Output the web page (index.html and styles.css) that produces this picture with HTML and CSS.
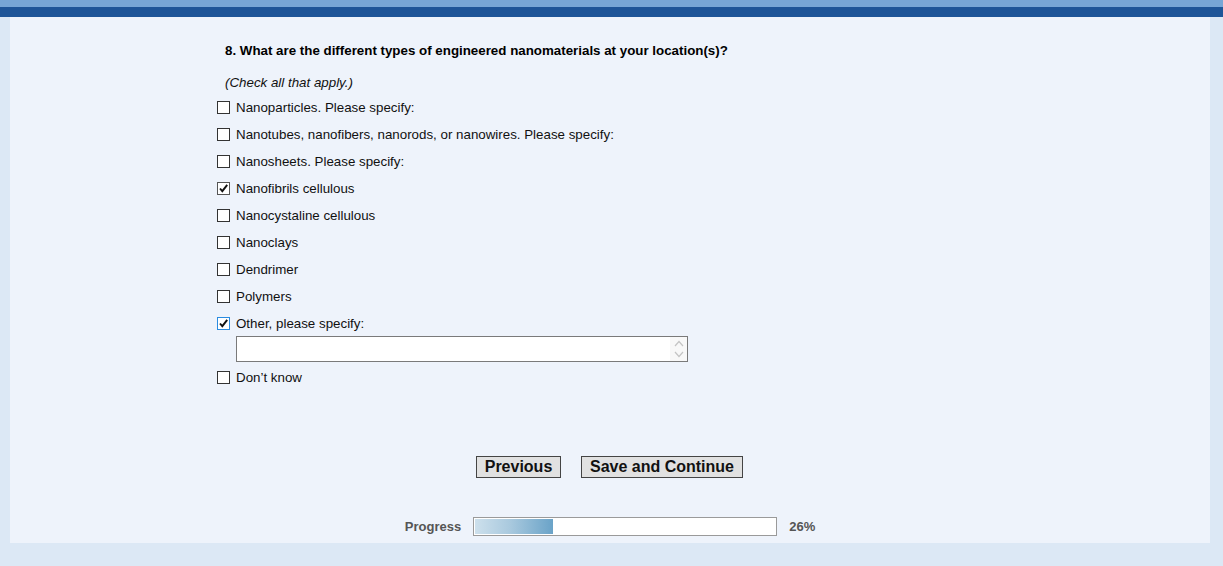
FILE: index.html
```html
<!DOCTYPE html>
<html>
<head>
<meta charset="utf-8">
<link rel="stylesheet" href="styles.css">
</head>
<body>
<div class="topbar"><div class="topbar-light"></div><div class="topbar-dark"></div></div>
<div class="page">
  <div class="panel">
    <div class="survey">
      <div class="question">8. What are the different types of engineered nanomaterials at your location(s)?</div>
      <div class="instruction">(Check all that apply.)</div>
      <div class="options">
        <div class="opt"><span class="cb"></span><span>Nanoparticles. Please specify:</span></div>
        <div class="opt"><span class="cb"></span><span>Nanotubes, nanofibers, nanorods, or nanowires. Please specify:</span></div>
        <div class="opt"><span class="cb"></span><span>Nanosheets. Please specify:</span></div>
        <div class="opt"><span class="cb checked"><svg viewBox="0 0 11 11" width="11" height="11"><path d="M2 5.5 L4.3 8.2 L9.2 1.8" fill="none" stroke="#111" stroke-width="1.9"/></svg></span><span>Nanofibrils cellulous</span></div>
        <div class="opt"><span class="cb"></span><span>Nanocystaline cellulous</span></div>
        <div class="opt"><span class="cb"></span><span>Nanoclays</span></div>
        <div class="opt"><span class="cb"></span><span>Dendrimer</span></div>
        <div class="opt"><span class="cb"></span><span>Polymers</span></div>
        <div class="opt opt-short"><span class="cb checked focus"><svg viewBox="0 0 11 11" width="11" height="11"><path d="M2 5.5 L4.3 8.2 L9.2 1.8" fill="none" stroke="#111" stroke-width="1.9"/></svg></span><span>Other, please specify:</span></div>
        <div class="textarea">
          <div class="ta-field"></div>
          <div class="ta-scroll">
            <svg width="10" height="7" viewBox="0 0 10 7"><path d="M1 6 L5 1.5 L9 6" fill="none" stroke="#c4c4c4" stroke-width="1.2"/></svg>
            <svg width="10" height="7" viewBox="0 0 10 7"><path d="M1 1 L5 5.5 L9 1" fill="none" stroke="#c4c4c4" stroke-width="1.2"/></svg>
          </div>
        </div>
        <div class="opt"><span class="cb"></span><span>Don’t know</span></div>
      </div>
    </div>
    <div class="buttons">
      <span class="btn btn-prev">Previous</span>
      <span class="btn btn-save">Save and Continue</span>
    </div>
    <div class="progress">
      <span class="plabel">Progress</span>
      <div class="pbar"><div class="pfill" style="width:78px"></div></div>
      <span class="plabel">26%</span>
    </div>
  </div>
</div>
</body>
</html>
```
FILE: styles.css
```css
html, body {
  margin: 0;
  padding: 0;
}
body {
  background: #dce8f5;
  font-family: "Liberation Sans", Arial, sans-serif;
  color: #000;
  height: 566px;
  overflow: hidden;
}
.topbar-light {
  height: 7px;
  background: #77a6d6;
}
.topbar-dark {
  height: 10px;
  background: #1e5598;
}
.page {
  padding: 0 13px 0 10px;
}
.panel {
  background: #eef3fb;
  height: 526px;
  display: flex;
  flex-direction: column;
}
.survey {
  margin-left: 207px;
  padding-top: 26px;
}
.question {
  font-size: 10pt;
  font-weight: bold;
  line-height: 16px;
  padding-left: 8px;
}
.instruction {
  font-size: 10pt;
  font-style: italic;
  line-height: 16px;
  padding-left: 8px;
  margin-top: 16px;
  color: #111;
}
.options {
  margin-top: 3px;
  display: flex;
  flex-direction: column;
}
.opt {
  height: 27px;
  display: flex;
  align-items: center;
  font-size: 10pt;
  color: #111;
}
.opt-short {
  height: 26px;
}
.cb {
  width: 11px;
  height: 11px;
  border: 1px solid #333;
  background: #fff;
  margin-right: 6px;
  display: flex;
  align-items: center;
  justify-content: center;
}
.cb.checked {
  border-color: #555;
}
.cb.focus {
  border-color: #2a8be0;
}
.textarea {
  margin-left: 19px;
  width: 450px;
  height: 24px;
  border: 1px solid #7a7a7a;
  background: #fff;
  display: flex;
  margin-bottom: 2px;
}
.ta-field {
  flex: 1;
}
.ta-scroll {
  width: 17px;
  background: #f8f8f8;
  display: flex;
  flex-direction: column;
  align-items: center;
  justify-content: center;
  gap: 4px;
}
.buttons {
  margin-top: 65px;
  padding-right: 1px;
  display: flex;
  justify-content: center;
  gap: 20px;
}
.btn {
  display: inline-flex;
  align-items: center;
  justify-content: center;
  height: 20px;
  border: 1px solid #444;
  background: #e1e1e1;
  font-size: 16px;
  font-weight: bold;
  color: #111;
}
.btn-prev {
  width: 83px;
}
.btn-save {
  width: 160px;
}
.progress {
  margin-top: 39px;
  display: flex;
  justify-content: center;
  align-items: center;
  gap: 12px;
}
.plabel {
  font-size: 13px;
  font-weight: bold;
  color: #555;
}
.pbar {
  width: 300px;
  height: 15px;
  border: 1px solid #9a9a9a;
  background: #fff;
  padding: 1px;
}
.pfill {
  height: 15px;
  background: linear-gradient(to right, #cde0ec 0%, #a9c9de 45%, #6aa3c8 100%);
}
```
